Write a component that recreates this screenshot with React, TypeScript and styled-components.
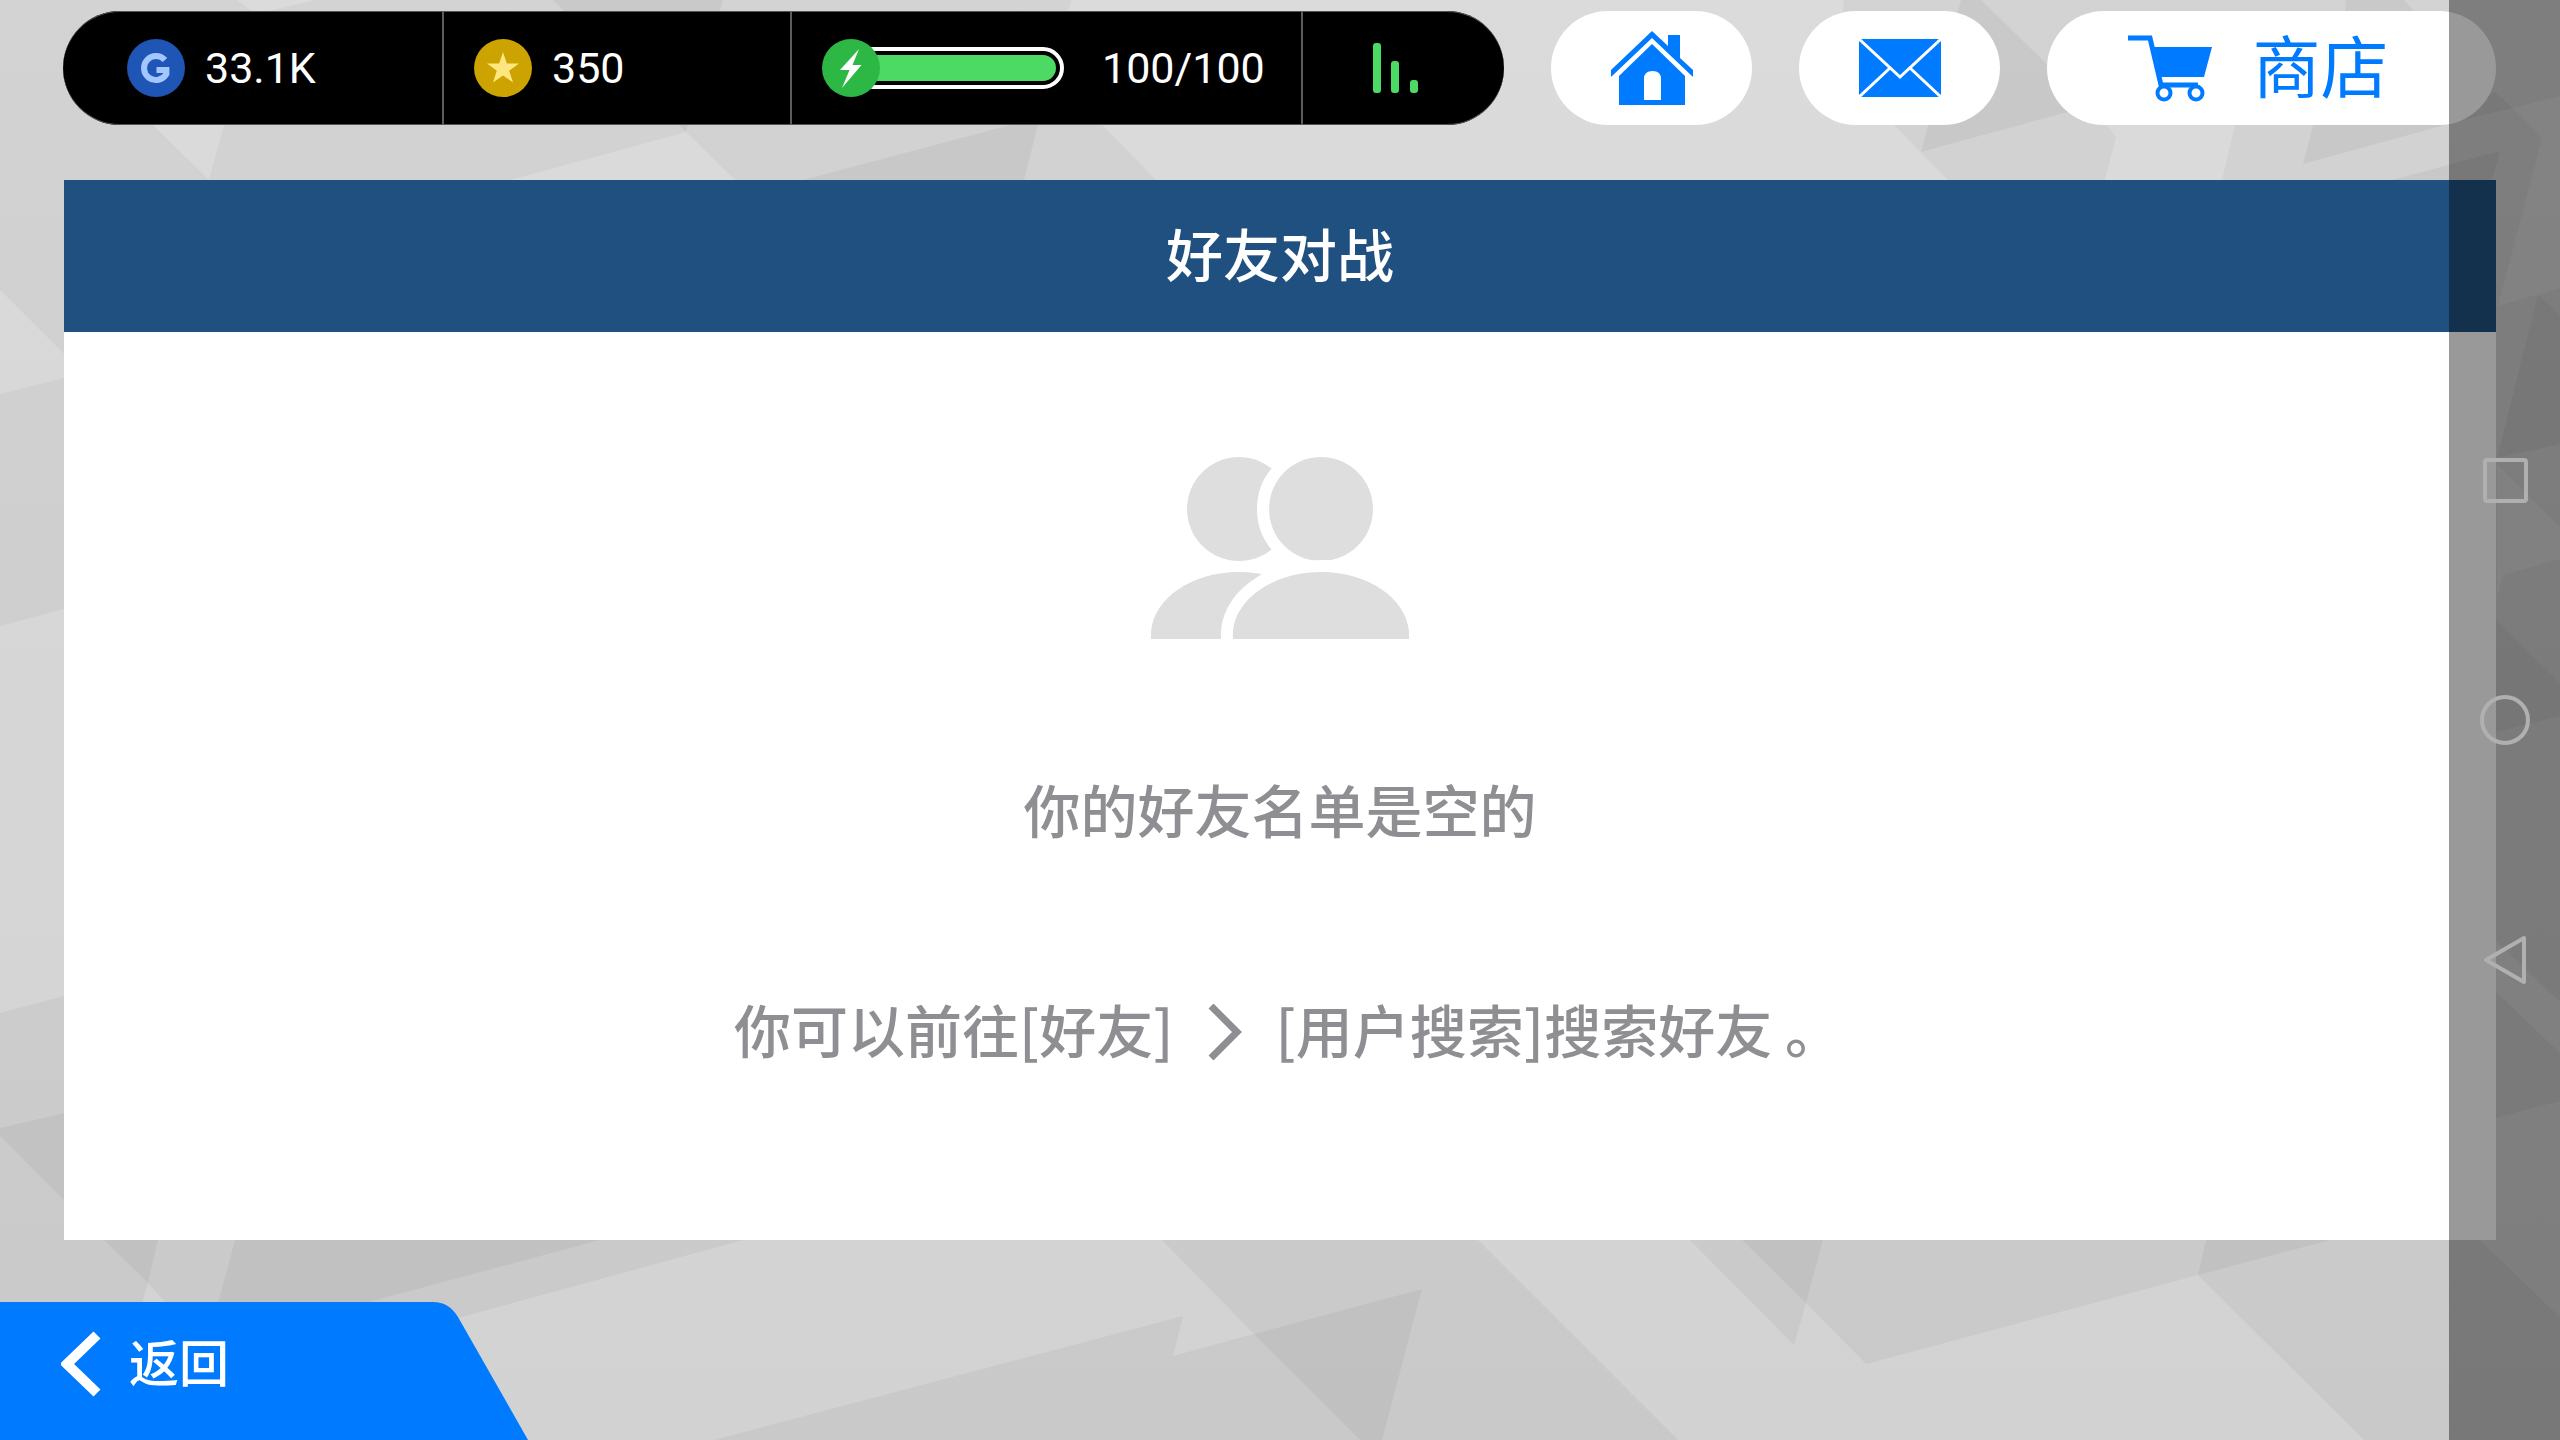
import React from 'react';
import styled, { createGlobalStyle } from 'styled-components';

const cjk = `"Noto Sans CJK SC", "Noto Sans", sans-serif`;
const numeric = `Roboto, "Noto Sans", sans-serif`;

const GlobalStyle = createGlobalStyle`
  * { box-sizing: border-box; }
  body { margin: 0; background: #cfcfcf; font-family: ${cjk}; }
  button { border: 0; padding: 0; background: none; font: inherit; color: inherit; cursor: pointer; }
  svg { display: block; flex: none; }
`;

const Page = styled.div`
  position: relative;
  display: flex;
  flex-direction: column;
  min-height: 100vh;
  overflow: hidden;
`;

const Backdrop = styled.svg`
  position: absolute;
  inset: 0;
  width: 100%;
  height: 100%;
  z-index: -1;
`;

const TopBar = styled.header`
  display: flex;
  gap: 47px;
  padding: 11px 64px 0 63px;
`;

const StatusBar = styled.div`
  flex: 1;
  display: grid;
  grid-template-columns: 379fr 348fr 511fr 203fr;
  height: 114px;
  border-radius: 57px;
  background: #000;
  box-shadow: inset 0 1px #555, inset 0 -1px #555;
  overflow: hidden;
`;

const Stat = styled.div<{ $inset?: number; $center?: boolean }>`
  display: flex;
  align-items: center;
  justify-content: ${(p) => (p.$center ? 'center' : 'flex-start')};
  gap: 20px;
  padding-left: ${(p) => p.$inset ?? 0}px;
  padding-right: ${(p) => (p.$center ? 16 : 0)}px;
  color: #fff;
  font: 400 43px/58px ${numeric};

  & + & { border-left: 2px solid #5c5c5c; }
`;

const Energy = styled.div`
  display: flex;
  align-items: center;
  width: 242px;
  margin-right: 18px;
`;

const Gauge = styled.div`
  flex: 1;
  height: 42px;
  margin-left: -29px;
  padding: 4px;
  border: 4px solid #fff;
  border-radius: 21px;
`;

const GaugeFill = styled.div`
  height: 100%;
  border-radius: 13px;
  background: #4cd964;
`;

const EnergyBadge = styled.svg`
  z-index: 1;
`;

const Label = styled.span`
  padding-bottom: 8px;
`;

const PillButton = styled.button<{ $wide?: boolean }>`
  display: flex;
  align-items: center;
  justify-content: center;
  gap: 40px;
  width: ${(p) => (p.$wide ? 449 : 201)}px;
  height: 114px;
  padding-right: ${(p) => (p.$wide ? 26 : 0)}px;
  border-radius: 57px;
  background: #fff;
  color: #007aff;
  font-size: 68px;
  line-height: 80px;
`;

const Panel = styled.main`
  flex: 1;
  display: flex;
  flex-direction: column;
  margin: 55px 64px 62px;
  background: #fff;
`;

const PanelTitle = styled.h1`
  margin: 0;
  padding: 32px 0 40px;
  background: #20507f;
  color: #fff;
  font-size: 57px;
  font-weight: 500;
  line-height: 80px;
  text-align: center;
`;

const EmptyState = styled.section`
  display: flex;
  flex-direction: column;
  align-items: center;
  padding-top: 125px;
  color: #8e8e93;
  font-size: 57px;
  font-weight: 500;
  line-height: 80px;
`;

const Message = styled.p`
  margin: 129px 0 0;
`;

const Hint = styled.p`
  display: flex;
  align-items: center;
  gap: 34px;
  margin: 140px 0 0;
  padding-left: 16px;
`;

const BackButton = styled.button`
  display: flex;
  align-items: center;
  gap: 28px;
  width: 528px;
  height: 138px;
  padding: 0 0 14px 61px;
  background: #007aff;
  clip-path: path('M0 0H433Q449 0 458 15L528 138H0Z');
  color: #fff;
  font-size: 50px;
  font-weight: 500;
  line-height: 60px;
`;

const SystemNav = styled.nav`
  position: fixed;
  inset: 0 0 0 auto;
  display: flex;
  flex-direction: column;
  align-items: center;
  justify-content: center;
  gap: 160px;
  width: 111px;
  background: rgba(0, 0, 0, 0.4);
`;

const NavButton = styled.button`
  display: grid;
  place-items: center;
  width: 80px;
  height: 80px;
`;

const lightFacets = [
  '237,0 316,0 255,14', '153,125 224,125 209,180', '510,180 686,132 735,180',
  '0,290 64,354 64,378 0,394', '0,626 64,609 64,996 0,1013',
  '1072,0 1844,0 1836,66 1948,180 1156,180 1044,66',
  '2107,125 2235,125 2222,180 2105,180 2116,137',
  '2513,108 2560,96 2560,288 2498,306 2542,138',
  '2497,464 2560,527 2560,559 2503,575 2497,598',
  '2496,941 2560,1002 2560,1053 2496,992', '2496,1118 2560,1101 2560,1317 2480,1240',
  '148,1283 166,1303 142,1303',
  '743,1240 1162,1240 1254,1334 1173,1356 1183,1316 714,1440 440,1440 440,1323',
  '1478,1240 1690,1240 1794,1345 1806,1303 1866,1364 2198,1275 2364,1440 1678,1440',
];

const darkFacets = [
  '553,0 723,0 686,132', '1010,125 1038,125 1024,180 803,180', '0,1128 64,1113 64,1200 0,1136',
  '1961,0 1981,0 2090,106 1921,152', '2346,0 2404,0 2414,11 2345,11',
  '2313,125 2445,125 2303,164', '2495,92 2513,108 2447,123', '2500,151 2492,180 2392,180',
  '2538,295 2560,315 2560,444 2497,458', '2496,620 2560,683 2560,716 2496,732',
  '104,1240 158,1240 148,1283', '235,1240 600,1240 365,1303 218,1303',
  '1254,1334 1422,1289 1382,1440 1360,1440', '1742,1240 1823,1240 1806,1303',
  '2206,1240 2331,1240 2198,1275',
];

export default function App() {
  return (
    <Page>
      <GlobalStyle />
      <Backdrop viewBox="0 0 2560 1440" preserveAspectRatio="none" aria-hidden="true">
        <defs>
          <linearGradient id="shade" x1="0" y1="0" x2="0" y2="1">
            <stop offset="0" stopColor="#d3d3d3" />
            <stop offset="1" stopColor="#c9c9c9" />
          </linearGradient>
        </defs>
        <rect width="2560" height="1440" fill="url(#shade)" />
        {lightFacets.map((points) => <polygon key={points} points={points} fill="#fff" opacity=".18" />)}
        {darkFacets.map((points) => <polygon key={points} points={points} fill="#000" opacity=".042" />)}
      </Backdrop>

      <TopBar>
        <StatusBar>
          <Stat $inset={64}>
            <svg width="58" height="58" viewBox="0 0 58 58" aria-hidden="true">
              <circle cx="29" cy="29" r="29" fill="#1f56b5" />
              <path d="M38 21.100A12 12 0 1 0 39.400 35V31H29.500" fill="none" stroke="#a3c6ff" strokeWidth="6" />
            </svg>
            33.1K
          </Stat>
          <Stat $inset={30}>
            <svg width="58" height="58" viewBox="0 0 58 58" aria-hidden="true">
              <circle cx="29" cy="29" r="29" fill="#cca300" />
              <path d="M29 13L32.800 24.500H45L35.200 31.800L39 43.500L29 36.400L19 43.500L22.800 31.800L13 24.500H25.200Z" fill="#ffe680" />
            </svg>
            350
          </Stat>
          <Stat $inset={30}>
            <Energy>
              <EnergyBadge width="58" height="58" viewBox="0 0 58 58" aria-hidden="true">
                <circle cx="29" cy="29" r="29" fill="#2db845" />
                <path d="M37 10L18 31H27.500L20 49L39.500 26H30.500Z" fill="#fff" />
              </EnergyBadge>
              <Gauge role="meter" aria-label="体力" aria-valuemin={0} aria-valuemax={100} aria-valuenow={100}>
                <GaugeFill />
              </Gauge>
            </Energy>
            100/100
          </Stat>
          <Stat $center>
            <svg width="46" height="50" viewBox="0 0 46 50" fill="#4cd964" aria-hidden="true">
              <rect x="0" y="0" width="8" height="50" rx="3" />
              <rect x="18" y="18" width="8" height="32" rx="3" />
              <rect x="37" y="37" width="8" height="13" rx="3" />
            </svg>
          </Stat>
        </StatusBar>
        <PillButton aria-label="主页">
          <svg width="82" height="74" viewBox="0 0 82 74" fill="#007aff" aria-hidden="true">
            <path d="M41 0L57 15V4H69V27L82 39V46L41 7L0 46V39Z" />
            <path d="M41 13L74 45V74H8V45ZM33 69H50V48Q50 40 41.500 40Q33 40 33 48Z" fillRule="evenodd" />
          </svg>
        </PillButton>
        <PillButton aria-label="邮件">
          <svg width="82" height="58" viewBox="0 0 82 58" aria-hidden="true">
            <rect width="82" height="58" fill="#007aff" />
            <path d="M0 0L41 38L82 0M0 58L31 29M82 58L51 29" fill="none" stroke="#fff" strokeWidth="3" />
          </svg>
        </PillButton>
        <PillButton $wide>
          <svg width="84" height="67" viewBox="0 0 84 67" aria-hidden="true">
            <path d="M0 3H22L33 50H70" fill="none" stroke="#007aff" strokeWidth="5" />
            <path d="M24 12H84L76 42H32Z" fill="#007aff" />
            <g fill="#fff" stroke="#007aff" strokeWidth="4">
              <circle cx="36" cy="58" r="6.500" />
              <circle cx="68" cy="58" r="6.500" />
            </g>
          </svg>
          <Label>商店</Label>
        </PillButton>
      </TopBar>

      <Panel>
        <PanelTitle>好友对战</PanelTitle>
        <EmptyState>
          <svg width="258" height="182" viewBox="0 0 258 182" fill="#dedede" aria-hidden="true">
            <circle cx="88" cy="52" r="52" />
            <path d="M0 182C-3 145 38 115 88 115S179 145 176 182Z" />
            <g stroke="#fff" strokeWidth="24" paintOrder="stroke">
              <circle cx="170" cy="52" r="52" />
              <path d="M82 182C79 145 120 115 170 115S261 145 258 182V210H82Z" />
            </g>
          </svg>
          <Message>你的好友名单是空的</Message>
          <Hint>
            <Label>你可以前往[好友]</Label>
            <svg width="34" height="56" viewBox="0 0 34 56" aria-hidden="true">
              <path d="M3 2L29 28L3 54" fill="none" stroke="#8e8e93" strokeWidth="7" />
            </svg>
            <Label>[用户搜索]搜索好友 。</Label>
          </Hint>
        </EmptyState>
      </Panel>

      <BackButton>
        <svg width="40" height="66" viewBox="0 0 40 66" aria-hidden="true">
          <path d="M36 4L6 33L36 62" fill="none" stroke="#fff" strokeWidth="10" />
        </svg>
        <Label>返回</Label>
      </BackButton>

      <SystemNav>
        <NavButton aria-label="最近任务">
          <svg width="50" height="50" viewBox="0 0 50 50" fill="none" stroke="#b0b0b0" strokeWidth="4" aria-hidden="true">
            <rect x="5" y="5" width="41" height="41" rx="2" />
          </svg>
        </NavButton>
        <NavButton aria-label="主屏幕">
          <svg width="50" height="50" viewBox="0 0 50 50" fill="none" stroke="#b0b0b0" strokeWidth="4" aria-hidden="true">
            <circle cx="25" cy="25" r="23" />
          </svg>
        </NavButton>
        <NavButton aria-label="系统返回">
          <svg width="50" height="50" viewBox="0 0 50 50" fill="none" stroke="#b0b0b0" strokeWidth="4" strokeLinejoin="round" aria-hidden="true">
            <path d="M44 3V47L6 25Z" />
          </svg>
        </NavButton>
      </SystemNav>
    </Page>
  );
}
